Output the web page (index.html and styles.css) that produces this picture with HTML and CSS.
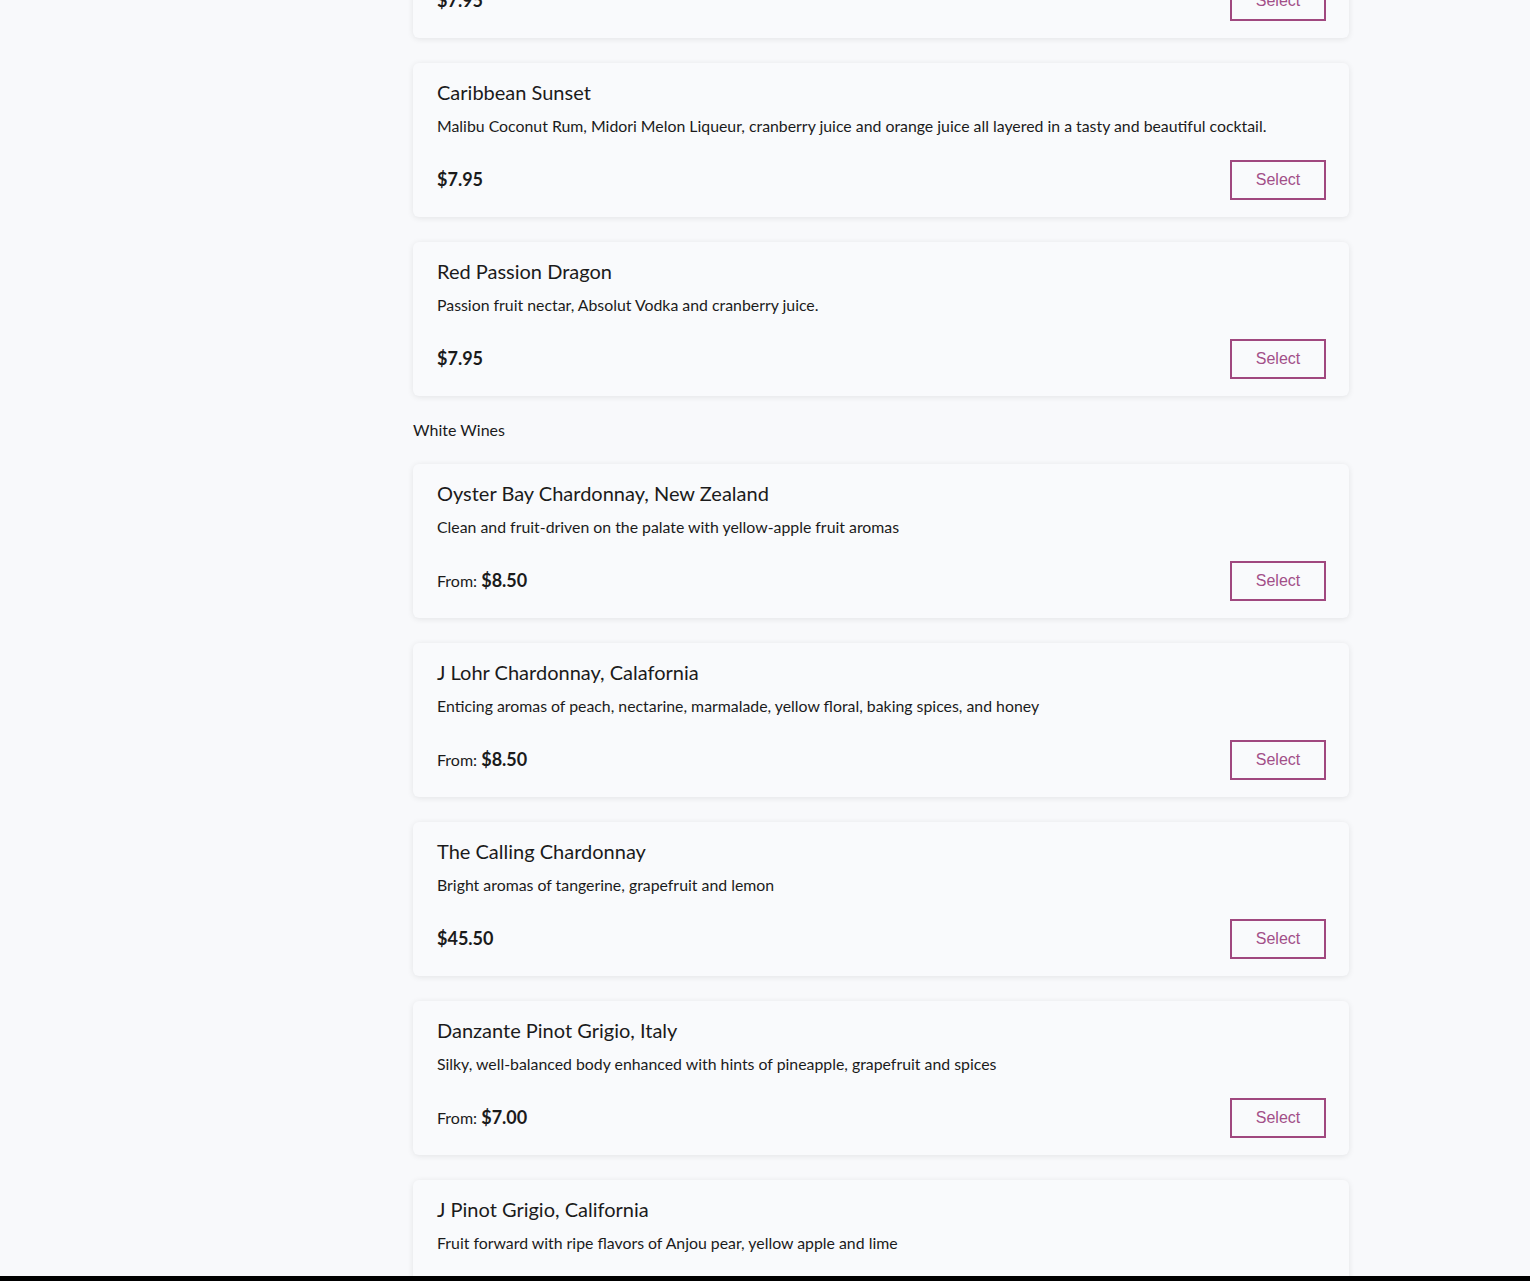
FILE: index.html
```html
<!DOCTYPE html>
<html lang="en">
<head>
<meta charset="utf-8">
<title>Menu</title>
<link rel="stylesheet" href="styles.css">
</head>
<body>
<main class="menu">
  <article class="item">
    <h3 class="item-name">Blue Hawaiian</h3>
    <p class="item-desc">Light rum, blue curacao, pineapple juice and cream of coconut.</p>
    <div class="item-foot"><span class="price"><b>$7.95</b></span><button class="select">Select</button></div>
  </article>
  <article class="item">
    <h3 class="item-name">Caribbean Sunset</h3>
    <p class="item-desc">Malibu Coconut Rum, Midori Melon Liqueur, cranberry juice and orange juice all layered in a tasty and beautiful cocktail.</p>
    <div class="item-foot"><span class="price"><b>$7.95</b></span><button class="select">Select</button></div>
  </article>
  <article class="item">
    <h3 class="item-name">Red Passion Dragon</h3>
    <p class="item-desc">Passion fruit nectar, Absolut Vodka and cranberry juice.</p>
    <div class="item-foot"><span class="price"><b>$7.95</b></span><button class="select">Select</button></div>
  </article>
  <h2 class="category">White Wines</h2>
  <article class="item">
    <h3 class="item-name">Oyster Bay Chardonnay, New Zealand</h3>
    <p class="item-desc">Clean and fruit-driven on the palate with yellow-apple fruit aromas</p>
    <div class="item-foot"><span class="price">From: <b>$8.50</b></span><button class="select">Select</button></div>
  </article>
  <article class="item">
    <h3 class="item-name">J Lohr Chardonnay, Calafornia</h3>
    <p class="item-desc">Enticing aromas of peach, nectarine, marmalade, yellow floral, baking spices, and honey</p>
    <div class="item-foot"><span class="price">From: <b>$8.50</b></span><button class="select">Select</button></div>
  </article>
  <article class="item">
    <h3 class="item-name">The Calling Chardonnay</h3>
    <p class="item-desc">Bright aromas of tangerine, grapefruit and lemon</p>
    <div class="item-foot"><span class="price"><b>$45.50</b></span><button class="select">Select</button></div>
  </article>
  <article class="item">
    <h3 class="item-name">Danzante Pinot Grigio, Italy</h3>
    <p class="item-desc">Silky, well-balanced body enhanced with hints of pineapple, grapefruit and spices</p>
    <div class="item-foot"><span class="price">From: <b>$7.00</b></span><button class="select">Select</button></div>
  </article>
  <article class="item">
    <h3 class="item-name">J Pinot Grigio, California</h3>
    <p class="item-desc">Fruit forward with ripe flavors of Anjou pear, yellow apple and lime</p>
    <div class="item-foot"><span class="price">From: <b>$8.00</b></span><button class="select">Select</button></div>
  </article>
</main>
<div class="bottom-bar"></div>
</body>
</html>
```
FILE: styles.css
```css
html, body {
  margin: 0;
  padding: 0;
}
body {
  background: #f8f9fb;
  font-family: Lato, "Noto Sans", sans-serif;
  color: #1b1b1b;
  overflow: hidden;
}
.menu {
  display: flex;
  flex-direction: column;
  gap: 25px;
  width: 936px;
  margin: -116px 0 0 413px;
}
.category {
  margin: 0;
  font-size: 16px;
  line-height: 18px;
  font-weight: 400;
  color: #1b1b1b;
}
.item {
  background: #f9fafc;
  border-radius: 6px;
  box-shadow: 0 1px 6px rgba(0, 0, 0, 0.09);
  padding: 17px 24px 17px 24px;
  display: flex;
  flex-direction: column;
  height: 154px;
  box-sizing: border-box;
}
.item-name {
  margin: 0;
  font-size: 20px;
  line-height: 24px;
  font-weight: 400;
}
.item-desc {
  margin: 13px 0 0;
  font-size: 15.85px;
  line-height: 18px;
}
.item-foot {
  margin-top: auto;
  display: flex;
  align-items: center;
  justify-content: space-between;
  padding-right: 0;
}
.price {
  font-size: 16px;
  line-height: 20px;
  padding-bottom: 2px;
}
.price b {
  font-size: 18px;
  font-weight: 700;
}
.select {
  width: 96px;
  height: 40px;
  box-sizing: border-box;
  margin-right: -1px;
  background: transparent;
  border: 2px solid #a0487f;
  border-radius: 0;
  color: #a24f88;
  font-family: "Liberation Sans", Arial, sans-serif;
  font-size: 16px;
  padding: 0;
}
.bottom-bar {
  position: fixed;
  left: 0;
  right: 0;
  bottom: 0;
  height: 5px;
  background: #000;
}
```
